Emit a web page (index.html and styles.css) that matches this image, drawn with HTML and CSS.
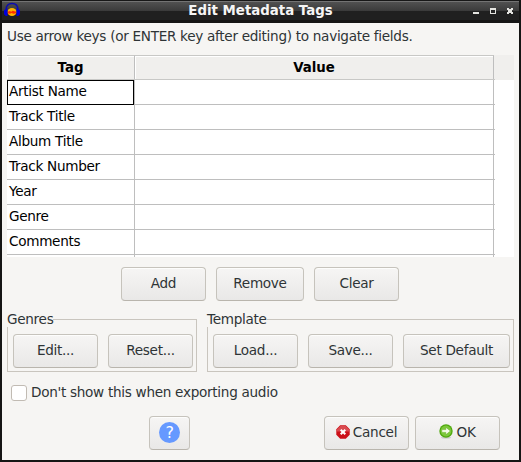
FILE: index.html
```html
<!DOCTYPE html>
<html lang="en">
<head>
<meta charset="utf-8">
<title>Edit Metadata Tags</title>
<link rel="stylesheet" href="styles.css">
</head>
<body>
<div class="window">
  <header class="titlebar">
    <svg class="app-icon" width="18" height="16" viewBox="0 0 18 16">
      <path d="M3 8C3 3 5.500 1.500 9 1.500S15 3 15 8" fill="none" stroke="#0a0ab4" stroke-width="1.300"/>
      <ellipse cx="9" cy="10" rx="4.600" ry="4" fill="#ffb400"/>
      <path d="M4.700 9.700l2-.8 1.500.8 1.500-1 3.500 1v1.500l-3 .5-1.500-.6-2 .7-2-.6z" fill="#ff3000"/>
      <path d="M4.500 6v8H2.800L1 12.300V8.500zM13.500 6v8h1.700L17 12.300V8.500z" fill="#0000dc"/>
    </svg>
    <h1>Edit Metadata Tags</h1>
    <svg class="controls" width="42" height="8" viewBox="0 0 42 8" shape-rendering="crispEdges" fill="#e4e4e0">
      <path d="M1 5h6v2H1zM18 1h6v6h-6zM35 1h2v1h2V1h2v2h-1v2h1v2h-2V6h-2v1h-2V5h1V3h-1z"/>
      <path d="M19 3h4v3h-4z" fill="#252525"/>
    </svg>
  </header>
  <main>
    <p class="hint">Use arrow keys (or ENTER key after editing) to navigate fields.</p>
    <div class="grid">
      <div class="row head"><div class="tag">Tag</div><div class="value">Value</div></div>
      <div class="row"><div class="tag selected">Artist Name</div><div class="value"></div></div>
      <div class="row"><div class="tag">Track Title</div><div class="value"></div></div>
      <div class="row"><div class="tag">Album Title</div><div class="value"></div></div>
      <div class="row"><div class="tag">Track Number</div><div class="value"></div></div>
      <div class="row"><div class="tag">Year</div><div class="value"></div></div>
      <div class="row"><div class="tag">Genre</div><div class="value"></div></div>
      <div class="row"><div class="tag">Comments</div><div class="value"></div></div>
      <div class="row"><div class="tag"></div><div class="value"></div></div>
    </div>
    <div class="actions">
      <button>Add</button><button class="remove">Remove</button><button>Clear</button>
    </div>
    <div class="groups">
      <fieldset class="genres"><legend>Genres</legend><div class="set"><button>Edit...</button><button>Reset...</button></div></fieldset>
      <fieldset class="template"><legend>Template</legend><div class="set"><button>Load...</button><button>Save...</button><button class="default">Set Default</button></div></fieldset>
    </div>
    <label class="check"><input type="checkbox"><span>Don't show this when exporting audio</span></label>
    <footer>
      <button class="help"><span class="help-mark">?</span></button>
      <button class="cancel">
        <svg width="14" height="14" viewBox="0 0 14 14"><path d="M4.200.3h5.600l3.900 3.900v5.600l-3.900 3.900H4.200L.3 9.800V4.200z" fill="#cc1018"/><path d="M4.400.9h5.200l3.400 3.400v2.200H1V4.300z" fill="#d94a50"/><path d="M4.700 4.700l4.600 4.600m0-4.600l-4.600 4.600" stroke="#fff" stroke-width="2"/></svg>
        <span>Cancel</span>
      </button>
      <button class="ok">
        <svg width="14" height="15" viewBox="0 0 14 15"><ellipse cx="7" cy="13.500" rx="5" ry="1.200" fill="#ccc"/><circle cx="7" cy="7" r="6.700" fill="#4fa80e"/><circle cx="7" cy="7" r="5.400" fill="#7cc83a"/><path d="M2.800 5.600h4V3.200L11.400 7 6.800 10.800V8.400h-4z" fill="#f4fbe9" stroke="#5fae20" stroke-width=".5"/></svg>
        <span>OK</span>
      </button>
    </footer>
  </main>
</div>
</body>
</html>
```

FILE: styles.css
```css
* { box-sizing: border-box; }
body { margin: 0; font: 13.6px/16px "DejaVu Sans", sans-serif; letter-spacing: -0.3px; color: #2e3436; }
.window { width: 521px; height: 462px; background: #f6f5f3; border: 2px solid #151514; border-top: 0; overflow: hidden; }
.titlebar {
  height: 23px; margin: 0 -2px; padding: 0 7px 0 3px; display: flex; align-items: center;
  background: linear-gradient(#171717 0 1px, #737373 1px 2px, #515151 2px, #3a3a3a 11px, #202020 11px, #202020 20px, #151515 20px);
}
.app-icon { margin-top: -3px; }
h1 { flex: 1; margin: -2px 0 0 28px; text-align: center; font-size: 13.33px; line-height: 16px; letter-spacing: 0; color: #f5f5f5; }
.controls { margin-top: -1px; }
main { padding: 0 5px; }
.hint { margin: 5px 0 11px; height: 16px; white-space: nowrap; }
.grid { height: 202px; overflow: hidden; background: linear-gradient(#f0efed 25px, #fff 25px); color: #000; }
.row { display: flex; width: 488px; height: 25px; border-bottom: 1px solid #bebebe; }
.tag { width: 128px; padding: 3px 2px 0; border-right: 1px solid #bebebe; }
.value { width: 359px; border-right: 1px solid #bebebe; }
.head { font-size: 13.33px; font-weight: bold; letter-spacing: 0; text-align: center; border-color: #c8c8c6; }
.head > div { padding-top: 4px; border-top: 1px solid #c8c8c6; box-shadow: inset 0 1px #fff, inset 1px 0 #fff; }
.selected { width: 127px; height: 25px; padding: 2px 1px 0; border: 1px solid #000; position: relative; }
.selected + .value { width: 360px; border-left: 1px solid #bebebe; }
button {
  width: 85px; height: 34px; margin: 0; padding: 0 0 3px; font: inherit; letter-spacing: inherit; color: inherit;
  display: flex; align-items: center; justify-content: center;
  border: 1px solid #c6c3bc; border-bottom-color: #b9b5ad; border-radius: 4px;
  background: linear-gradient(#f6f5f4, #e9e8e7); box-shadow: inset 0 1px #fdfdfc;
}
.actions { display: flex; justify-content: center; gap: 10px; margin: 10px 1px 0 0; }
.remove { width: 88px; }
.groups { display: flex; gap: 10px; margin-top: 10px; }
fieldset { min-width: 0; height: 61px; margin: 0; padding: 0; border: 1px solid #c9c5be; }
.genres { width: 190px; }
.template { width: 307px; }
legend { height: 16px; margin-left: -1px; padding: 0; }
.set { display: flex; gap: 10px; padding: 7px 0 0 5px; }
.default { width: 107px; }
.check { display: flex; height: 16px; margin: 13px 0 0 4px; }
input { appearance: none; width: 16px; height: 16px; margin: 0; border: 1px solid #c1bbb3; border-radius: 3px; background: #fff; }
.check span { margin: -1px 0 0 4px; }
footer { display: flex; margin: 15px 0 0 142px; }
.help { width: 41px; padding: 0 0 1px; }
.help-mark { width: 21px; height: 21px; border-radius: 50%; background: #6699ff; color: #fff; font: 16px/21px "DejaVu Sans", sans-serif; text-align: center; }
.cancel { margin-left: 134px; gap: 3px; }
.ok { margin-left: 6px; gap: 3px; }
```
